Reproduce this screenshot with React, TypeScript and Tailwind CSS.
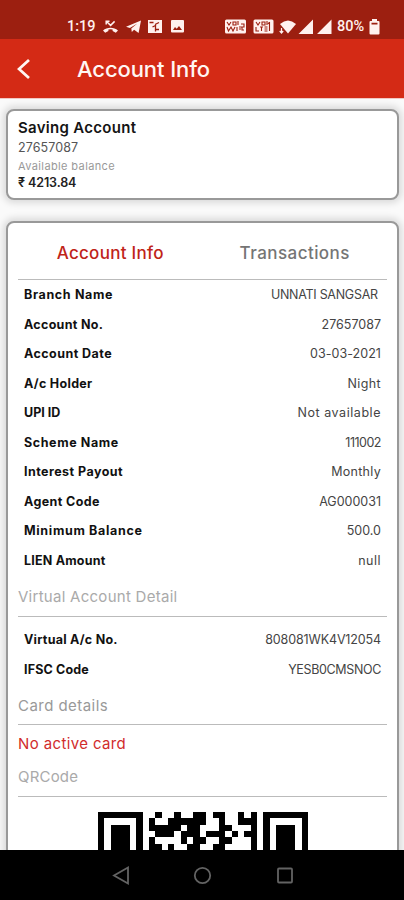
interface Detail {
  label: string;
  value: string;
  labelClass: string;
  valueClass: string;
}

const accountDetails: Detail[] = [
  { label: "Branch Name", value: "UNNATI SANGSAR\u00a0", labelClass: "tracking-[0.65px]", valueClass: "tracking-[-0.28px]" },
  { label: "Account No.", value: "27657087", labelClass: "tracking-[0.3px]", valueClass: "tracking-normal" },
  { label: "Account Date", value: "03-03-2021", labelClass: "tracking-[0.45px]", valueClass: "tracking-[0.05px]" },
  { label: "A/c Holder", value: "Night", labelClass: "tracking-[0.3px]", valueClass: "tracking-[0.4px]" },
  { label: "UPI ID", value: "Not available", labelClass: "tracking-normal", valueClass: "tracking-[0.55px]" },
  { label: "Scheme Name", value: "111002", labelClass: "tracking-[0.6px]", valueClass: "tracking-[-0.5px]" },
  { label: "Interest Payout", value: "Monthly", labelClass: "tracking-[0.45px]", valueClass: "tracking-[0.3px]" },
  { label: "Agent Code", value: "AG000031", labelClass: "tracking-[0.4px]", valueClass: "tracking-normal" },
  { label: "Minimum Balance", value: "500.0", labelClass: "tracking-[0.67px]", valueClass: "tracking-normal" },
  { label: "LIEN Amount", value: "null", labelClass: "tracking-[0.2px]", valueClass: "tracking-[0.5px]" },
];

const virtualDetails: Detail[] = [
  { label: "Virtual A/c No.", value: "808081WK4V12054", labelClass: "tracking-[0.25px]", valueClass: "tracking-[-0.13px]" },
  { label: "IFSC Code", value: "YESB0CMSNOC", labelClass: "tracking-[0.15px]", valueClass: "tracking-[-0.35px]" },
];

const qrRows = [
  "111111100100100110110010101111111",
  "100000101001111110010011101000001",
  "101110101111101100011000101011101",
  "101110100111011101110101101011101",
  "101110101000010110011000101011101",
  "101110101101001100110000101011101",
];

function StatusBar() {
  return (
    <div className="flex h-[39px] items-start bg-[#9c1f10] pt-[17px] pl-[67px] text-[#fff1ee]">
      <div className="w-[35px] font-[Roboto] text-[14.5px] leading-[19px] font-medium">1:19</div>
      <svg className="mt-[2px] h-[15px] w-[84px]" viewBox="0 0 84 15" fill="currentColor">
        <path d="M4.2 5.5V2.2h3.3M4.5 2.5 8.6 6.4l4-4" fill="none" stroke="currentColor" strokeWidth="1.5" />
        <path d="M1 11.6C5 7.8 12 7.8 16 11.6l-2.2 2.2-3.2-1.9V10.5q-2.1-.5-4.2 0v1.4l-3.2 1.9z" />
        <path d="M24 7.7 39 1.5 36.6 14l-4.5-3.2-2.3 2.2-.5-3.6 6-5-7.4 4.5z" />
        <path d="M46 1h14v13H46z" />
        <path d="M47.5 3.5h4M53 5.5l4-2M50.5 8l3-1.5v6M54 10.5h3" fill="none" stroke="#9c1f10" strokeWidth="1.3" />
        <path fillRule="evenodd" d="M70 1h11q1 0 1 1v10.5q0 1-1 1H70q-1 0-1-1V2q0-1 1-1zm1 10h9l-3-4-2.3 2.8L73 8z" />
      </svg>
      <svg className="ml-[39px] h-5 w-[108px]" viewBox="0 0 108 20" fill="currentColor">
        <rect y="2.5" width="21" height="14" rx="1.5" />
        <g fill="none" stroke="#9c1f10" strokeWidth="1.1">
          <path d="m2 5 2 3 2-3m2 0h3v3H8zm5-1v4M2 10l1.5 4L6 10l2 4 2-4m2 0v4m2-4h3m-3 2h2m0-5h3v3h-2v3h2" />
        </g>
        <rect x="28.5" y="2.5" width="20" height="14" rx="1.5" />
        <g fill="none" stroke="#9c1f10" strokeWidth="1.1">
          <path d="m31 5 2 3 2-3m2 0h3v3h-3zm5-1v4m-11 2v4h3m1-4h3m-1.5 0v4m3-4h3m-3 2h3m-3 2h3m2-9v9m-1.5-7 1.5-2" />
        </g>
        <path d="M55 7q8-7 16 0l-8 9.5z" />
        <path d="M56.5 11v5m-1.8-2 1.8 2 1.7-2" fill="none" stroke="currentColor" strokeWidth="1.2" />
        <path d="M73.5 17 88 2.5V17zM92 17l14.5-14.5V17z" />
      </svg>
      <div className="ml-1 w-8 font-[Roboto] text-[14.5px] leading-[19px] font-medium">80%</div>
      <svg className="mt-[2px] h-4 w-[11px]" viewBox="0 0 11 16" fill="currentColor">
        <path fillRule="evenodd" d="M3 0h5v2h1.5q1 0 1 1v11.5q0 1-1 1h-8q-1 0-1-1V3q0-1 1-1H3zM2.5 3.7v1.8h6V3.7z" />
      </svg>
    </div>
  );
}

function Header() {
  return (
    <header className="flex h-[59px] items-center bg-[#d42a15] text-[#fff6f3]">
      <svg className="ml-[17px] h-[22px] w-[14px]" viewBox="0 0 14 22" fill="none" stroke="currentColor" strokeWidth="2.8">
        <path d="M12 2 2 11l10 9" />
      </svg>
      <h1 className="ml-[46px] pt-px text-[22px] font-medium tracking-[-0.1px]">Account Info</h1>
    </header>
  );
}

function DetailRow({ label, value, labelClass, valueClass }: Detail) {
  return (
    <div className="flex h-[29.5px] items-center justify-between px-[6px] pt-[2px] text-[12.5px] whitespace-nowrap">
      <span className={`font-bold text-[#111] ${labelClass}`}>{label}</span>
      <span className={`text-[#444] ${valueClass}`}>{value}</span>
    </div>
  );
}

function QrCode() {
  return (
    <svg className="mx-auto block h-[210px] w-[210px]" viewBox="0 0 33 33" shapeRendering="crispEdges">
      {qrRows.map((row, y) =>
        row.split("").map((cell, x) =>
          cell === "1" ? <rect key={`${x}-${y}`} x={x} y={y} width="1" height="1" /> : null
        )
      )}
    </svg>
  );
}

function NavigationBar() {
  return (
    <nav className="h-[50px] shrink-0 bg-black pt-[15px] pl-[110px]">
      <svg className="h-[22px] w-[190px]" viewBox="0 0 190 22" fill="none" stroke="#636363" strokeWidth="1.8">
        <path d="M4 10.5 18 2.5v16z" />
        <circle cx="92.5" cy="10.5" r="7.7" />
        <rect x="168" y="3.5" width="14" height="14" rx="1" />
      </svg>
    </nav>
  );
}

export default function App() {
  return (
    <div className="flex h-[900px] w-[404px] flex-col overflow-hidden bg-[#fafafa] font-[Inter,sans-serif]">
      <StatusBar />
      <Header />
      <main className="min-h-0 flex-1 overflow-hidden border-t border-[#f2c8c4] px-[6px] pt-[10px] pr-[5px]">
        {/* Balance card */}
        <section className="h-[91px] rounded-[8px] border-2 border-[#999] bg-white px-[10px] pt-[6px] shadow-[0_0_7px_3px_rgba(0,0,0,0.13)]">
          <div className="text-[15px] leading-[21px] font-semibold tracking-[0.3px] text-[#151515]">Saving Account</div>
          <div className="text-[12.5px] leading-[20px] tracking-[0.1px] text-[#555]">27657087</div>
          <div className="text-[11px] leading-[16px] tracking-[0.38px] text-[#999]">Available balance</div>
          <div className="text-[12.5px] leading-[18px] font-semibold tracking-[-0.1px] text-[#222]">₹ 4213.84</div>
        </section>

        <section className="mt-[21px] h-[800px] rounded-[8px] border-2 border-[#999] bg-white px-[10px] shadow-[0_0_7px_3px_rgba(0,0,0,0.13)]">
          <div className="flex h-[57px] items-center border-b border-[#bbb] pt-[6px] text-[17px] font-medium">
            <div className="flex-1 text-center tracking-[0.27px] text-[#bf2419]">Account Info</div>
            <div className="flex-1 text-center tracking-[0.45px] text-[#757575]">Transactions</div>
          </div>

          <div>
            {accountDetails.map((detail) => (
              <DetailRow key={detail.label} {...detail} />
            ))}
          </div>

          <div className="h-[42px] border-b border-[#bbb] pt-[11px] text-[15px] leading-[22px] tracking-[0.27px] text-[#aaa]">
            Virtual Account Detail
          </div>
          <div className="pt-2">
            {virtualDetails.map((detail) => (
              <DetailRow key={detail.label} {...detail} />
            ))}
          </div>

          <div className="h-[41px] border-b border-[#bbb] pt-[11px] text-[15px] leading-[22px] tracking-[0.45px] text-[#999]">
            Card details
          </div>
          <div className="h-[33px] pt-[8px] text-[15px] leading-[22px] tracking-[0.38px] text-[#d12c2c]">
            No active card
          </div>
          <div className="h-[39px] border-b border-[#bbb] pt-[8px] text-[15px] leading-[22px] tracking-[0.2px] text-[#aaa]">
            QRCode
          </div>
          <div className="pt-[15px]">
            <QrCode />
          </div>
        </section>
      </main>
      <NavigationBar />
    </div>
  );
}
